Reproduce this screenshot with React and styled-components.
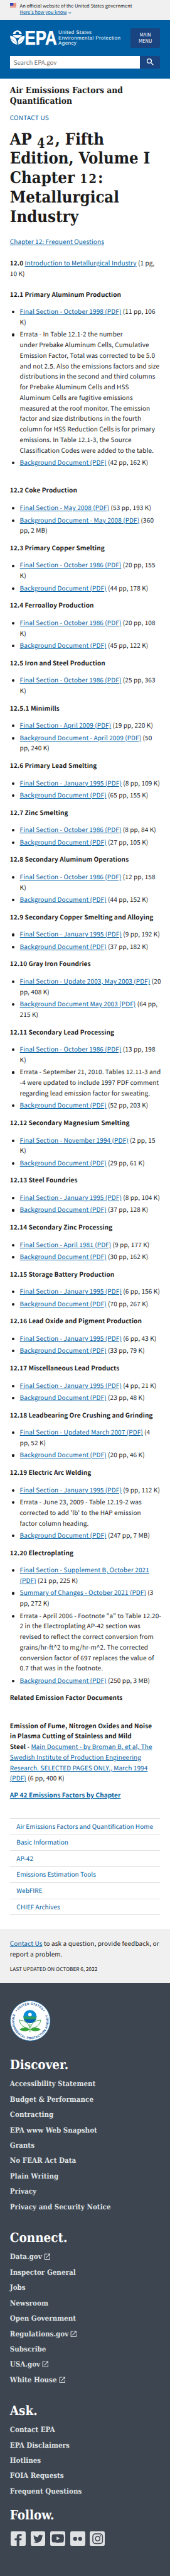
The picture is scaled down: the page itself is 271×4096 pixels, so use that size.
import React from 'react';
import styled, { createGlobalStyle } from 'styled-components';
import { FaTwitter, FaYoutube, FaInstagram } from 'react-icons/fa';
import { MdOpenInNew, MdSearch, MdExpandMore } from 'react-icons/md';

const sans = '"Noto Sans CJK SC", "Noto Sans", sans-serif';
const serif = '"DejaVu Serif Condensed", "DejaVu Serif", serif';

const GlobalStyle = createGlobalStyle`
  html { font-size: 6.585px; background: #3d4551; }
  body {
    margin: 0;
    font-family: ${sans};
    font-size: 1.52rem;
    line-height: 2.544rem;
    letter-spacing: 0.011em;
    color: #1b1b1b;
    text-rendering: geometricPrecision;
  }
  *, *::before { box-sizing: border-box; }
  h1, h2, h3, p, ul { margin: 0; padding: 0; font-size: inherit; font-weight: inherit; }
  ul { list-style: none; }
`;

const Page = styled.div`
  width: 100%;
  overflow: hidden;
  background: #fff;
  white-space: nowrap;
`;

const Link = styled.a`
  color: #005ea2;
  text-decoration: underline;
  text-underline-offset: 0.12em;
  text-decoration-thickness: 1px;
`;

/* ---------- government banner ---------- */

const Banner = styled.div`
  display: flex;
  gap: 0.8rem;
  height: 4.9rem;
  padding: 0.7rem 2.4rem 0;
  background: #f0f0f0;
  font-size: 1.148rem;
  line-height: 1.61rem;
  letter-spacing: 0;
`;

const FlagSvg = styled.svg`
  flex: none;
  width: 1.6rem;
  height: 1.1rem;
  margin-top: 0.1rem;
`;

const Chevron = styled(MdExpandMore)`
  width: 1.35rem;
  height: 1.35rem;
  margin-left: 0.15rem;
  vertical-align: -0.4rem;
  color: #005ea2;
`;

function Flag() {
  return (
    <FlagSvg viewBox="0 0 16 11">
      <rect width="16" height="11" fill="#fff" />
      {[0, 1, 2, 3, 4, 5, 6].map((i) => (
        <rect key={i} y={i * 1.69} width="16" height="0.85" fill="#db3e1f" />
      ))}
      <rect width="8" height="6" fill="#1e33b1" />
      {[1, 2.6, 4.2].flatMap((y) =>
        [1.2, 3.1, 5, 6.9].map((x) => <circle key={`${x}-${y}`} cx={x} cy={y + 0.4} r="0.4" fill="#fff" />)
      )}
    </FlagSvg>
  );
}

/* ---------- header ---------- */

const Header = styled.header`
  height: 14.1rem;
  padding: 1.9rem 2.4rem 0;
  background: #005ea2;
`;

const HeaderRow = styled.div`
  display: flex;
  align-items: center;
  justify-content: space-between;
  height: 4.7rem;
`;

const LogoSvg = styled.svg`
  width: 27.2rem;
  height: 6rem;
`;

const MenuButton = styled.button`
  width: 7.15rem;
  height: 4.7rem;
  padding: 0 0 0.05rem;
  border: 0;
  border-radius: 0.3rem;
  background: #1a4480;
  color: #fff;
  font: 1.14rem/1.6rem ${sans};
`;

const SearchBar = styled.div`
  display: flex;
  height: 3rem;
  margin-top: 2rem;
`;

const SearchField = styled.div`
  width: 31.6rem;
  padding-left: 0.9rem;
  background: #fff;
  color: #757575;
  font-size: 1.46rem;
  line-height: 3.1rem;
  letter-spacing: 0;
`;

const SearchButton = styled.button`
  display: flex;
  align-items: center;
  justify-content: center;
  width: 4.85rem;
  padding: 0;
  border: 0;
  border-radius: 0 0.3rem 0.3rem 0;
  background: #1a4480;
  color: #fff;
  font-size: 2.3rem;
`;

function Logo() {
  return (
    <LogoSvg viewBox="24 61 272 60" fill="#fff">
      <path d="M30.8 82.2 A11 10 0 0 1 52.6 82.2 H46 A4.4 4.4 0 1 0 37.4 82.2 Z" />
      <circle cx="41.7" cy="81" r="3" fill="#005ea2" />
      <path d="M31 85.4 H52.4 C50.5 89.4 46.4 91.8 41.7 91.8 C37 91.8 33 89.4 31 85.4 Z" />
      <path d="M24 86.6 C35 87.6 41.2 94.5 40.8 108 C30.4 106.2 24.4 98.6 24 86.6 Z" />
      <path d="M59.4 86.6 C48.4 87.6 42.2 94.5 42.6 108 C53 106.2 59 98.6 59.4 86.6 Z" />
      <path d="M26.8 95.5 C34 98 38.5 102 40.6 107.4" fill="none" stroke="#005ea2" strokeWidth="0.7" />
      <path d="M56.6 95.5 C49.4 98 44.9 102 42.8 107.4" fill="none" stroke="#005ea2" strokeWidth="0.7" />
      <text
        x="59.6"
        y="107.6"
        fontFamily="Liberation Sans, Arial, sans-serif"
        fontWeight="700"
        fontSize="48"
        textLength="78"
        lengthAdjust="spacingAndGlyphs"
        stroke="#fff"
        strokeWidth="0.9"
      >EPA</text>
      <g fontFamily="Liberation Sans, Arial, sans-serif" fontSize="12.2" letterSpacing="0.62">
        <text x="141" y="82.6">United States</text>
        <text x="141" y="95.2">Environmental Protection</text>
        <text x="141" y="107.8">Agency</text>
      </g>
    </LogoSvg>
  );
}

/* ---------- page body ---------- */

const Main = styled.main`
  padding: 1.65rem 2.4rem 3.25rem;
`;

const SiteTitle = styled.h2`
  font: 700 2.085rem/2.56rem ${serif};
  letter-spacing: 0;
`;

const ContactLink = styled.p`
  margin-top: 1.39rem;
  color: #005ea2;
  letter-spacing: 0.025em;
`;

const Title = styled.h1`
  margin-top: 1.68rem;
  font: 700 3.88rem/4.68rem ${serif};
  letter-spacing: 0;
`;

const OldFigure = styled.span`
  font-size: 0.78em;
  line-height: 0;
  display: inline-block;
  transform: translateY(${(p) => (p.$drop ? '0.2em' : '0')}) scaleY(${(p) => (p.$drop ? 1.1 : 0.98)});
  letter-spacing: 0.1em;
`;

const Paragraph = styled.p`
  margin-top: ${(p) => p.$gap}rem;
`;

const SectionTitle = styled.h3`
  margin-top: ${(p) => p.$gap || 1.64}rem;
  font-weight: 700;
`;

const Documents = styled.ul`
  margin-top: 1.66rem;
`;

const Item = styled.li`
  display: grid;
  grid-template-columns: 2.4rem 1fr;
  & + & { margin-top: 0.41rem; }
  &::before {
    content: '';
    width: 0.62rem;
    height: 0.62rem;
    margin: 1.07rem 0 0 0.55rem;
    border-radius: 50%;
    background: #1b1b1b;
  }
`;

const SideNav = styled.ul`
  margin-top: 4.2rem;
  border-top: 1px solid #dfe1e2;
`;

const SideNavItem = styled.li`
  height: 3.895rem;
  padding-left: 1.6rem;
  border-bottom: 1px solid #dfe1e2;
  color: #005ea2;
  letter-spacing: 0;
  line-height: 3.76rem;
`;

const Feedback = styled.section`
  height: 13.14rem;
  padding: 2.31rem 2.4rem 0;
  background: #f0f0f0;
`;

const Updated = styled.p`
  margin-top: 1.48rem;
  font-size: 1.249rem;
  line-height: 2rem;
  letter-spacing: 0;
`;

/* An entry is either plain lines of text, or a link followed by its page count and size. */
const final = (when, size, wrap) => ({ link: `Final Section - ${when} (PDF)`, size, wrap });
const background = (size, wrap, when = '') => ({ link: `Background Document${when} (PDF)`, size, wrap });

const sections = [
  { title: '12.3 Primary Copper Smelting', items: [final('October 1986', '(20 pp, 155', 'K)'), background('(44 pp, 178 K)')] },
  { title: '12.4 Ferroalloy Production', items: [final('October 1986', '(20 pp, 108', 'K)'), background('(45 pp, 122 K)')] },
  { title: '12.5 Iron and Steel Production', items: [final('October 1986', '(25 pp, 363', 'K)')] },
  { title: '12.5.1 Minimills', items: [final('April 2009', '(19 pp, 220 K)'), background('(50', 'pp, 240 K)', ' - April 2009')] },
  { title: '12.6 Primary Lead Smelting', items: [final('January 1995', '(8 pp, 109 K)'), background('(65 pp, 155 K)')] },
  { title: '12.7 Zinc Smelting', items: [final('October 1986', '(8 pp, 84 K)'), background('(27 pp, 105 K)')] },
  { title: '12.8 Secondary Aluminum Operations', items: [final('October 1986', '(12 pp, 158', 'K)'), background('(44 pp, 152 K)')] },
  { title: '12.9 Secondary Copper Smelting and Alloying', items: [final('January 1995', '(9 pp, 192 K)'), background('(37 pp, 182 K)')] },
  { title: '12.10 Gray Iron Foundries', items: [final('Update 2003, May 2003', '(20', 'pp, 408 K)'), background('(64 pp,', '215 K)', ' May 2003')] },
  {
    title: '12.11 Secondary Lead Processing',
    items: [
      final('October 1986', '(13 pp, 198', 'K)'),
      { lines: ['Errata - September 21, 2010. Tables 12.11-3 and', '-4 were updated to include 1997 PDF comment', 'regarding lead emission factor for sweating.'] },
      background('(52 pp, 203 K)'),
    ],
  },
  { title: '12.12 Secondary Magnesium Smelting', items: [final('November 1994', '(2 pp, 15', 'K)'), background('(29 pp, 61 K)')] },
  { title: '12.13 Steel Foundries', items: [final('January 1995', '(8 pp, 104 K)'), background('(37 pp, 128 K)')] },
  { title: '12.14 Secondary Zinc Processing', items: [final('April 1981', '(9 pp, 177 K)'), background('(30 pp, 162 K)')] },
  { title: '12.15 Storage Battery Production', items: [final('January 1995', '(6 pp, 156 K)'), background('(70 pp, 267 K)')] },
  { title: '12.16 Lead Oxide and Pigment Production', items: [final('January 1995', '(6 pp, 43 K)'), background('(33 pp, 79 K)')] },
  { title: '12.17 Miscellaneous Lead Products', items: [final('January 1995', '(4 pp, 21 K)'), background('(23 pp, 48 K)')] },
  { title: '12.18 Leadbearing Ore Crushing and Grinding', items: [final('Updated March 2007', '(4', 'pp, 52 K)'), background('(20 pp, 46 K)')] },
  {
    title: '12.19 Electric Arc Welding',
    items: [
      final('January 1995', '(9 pp, 112 K)'),
      { lines: ['Errata - June 23, 2009 - Table 12.19-2 was', "corrected to add 'lb' to the HAP emission", 'factor column heading.'] },
      background('(247 pp, 7 MB)'),
    ],
  },
  {
    title: '12.20 Electroplating',
    items: [
      { link: 'Final Section - Supplement B, October 2021', linkWrap: '(PDF)', size: '(21 pp, 225 K)' },
      { link: 'Summary of Changes - October 2021 (PDF)', size: '(3', wrap: 'pp, 272 K)' },
      {
        lines: [
          'Errata - April 2006 - Footnote "a" to Table 12.20-',
          '2 in the Electroplating AP-42 section was',
          'revised to reflect the correct conversion from',
          'grains/hr-ft^2 to mg/hr-m^2. The corrected',
          'conversion factor of 697 replaces the value of',
          '0.7 that was in the footnote.',
        ],
      },
      background('(250 pp, 3 MB)'),
    ],
  },
];

const aluminum = [
  final('October 1998', '(11 pp, 106', 'K)'),
  {
    lines: [
      'Errata - In Table 12.1-2 the number',
      'under Prebake Aluminum Cells, Cumulative',
      'Emission Factor, Total was corrected to be 5.0',
      'and not 2.5. Also the emissions factors and size',
      'distributions in the second and third columns',
      'for Prebake Aluminum Cells and HSS',
      'Aluminum Cells are fugitive emissions',
      'measured at the roof monitor. The emission',
      'factor and size distributions in the fourth',
      'column for HSS Reduction Cells is for primary',
      'emissions. In Table 12.1-3, the Source',
      'Classification Codes were added to the table.',
    ],
  },
  background('(42 pp, 162 K)'),
];

const coke = [final('May 2008', '(53 pp, 193 K)'), background('(360', 'pp, 2 MB)', ' - May 2008')];

function Lines({ lines }) {
  return lines.map((line, i) => (
    <React.Fragment key={i}>
      {i > 0 && <br />}
      {line}
    </React.Fragment>
  ));
}

function DocumentList({ items }) {
  return (
    <Documents>
      {items.map((item, i) => (
        <Item key={i}>
          {item.lines ? (
            <span><Lines lines={item.lines} /></span>
          ) : (
            <span>
              <Link><Lines lines={item.linkWrap ? [item.link, item.linkWrap] : [item.link]} /></Link>
              {' '}
              <Lines lines={item.wrap ? [item.size, item.wrap] : [item.size]} />
            </span>
          )}
        </Item>
      ))}
    </Documents>
  );
}

/* ---------- footer ---------- */

const Footer = styled.footer`
  height: 142.96rem;
  padding: 4.15rem 2.4rem 0;
  background: #3d4551;
  font-family: ${serif};
  font-weight: 700;
  letter-spacing: 0;
`;

const SealSvg = styled.svg`
  display: block;
  width: 9.8rem;
  height: 9.8rem;
  margin-left: 0.1rem;
`;

const FooterTitle = styled.h2`
  margin-top: ${(p) => p.$gap}rem;
  color: #fff;
  font-size: 3.11rem;
  line-height: 3.6rem;
`;

const FooterLinks = styled.ul`
  margin-top: 0.82rem;
`;

const FooterLink = styled.li`
  height: 3.715rem;
  color: #dfe1e2;
  font-size: 1.75rem;
  line-height: 3.66rem;
`;

const ExternalIcon = styled(MdOpenInNew)`
  width: 1.9rem;
  height: 1.9rem;
  margin-left: 0.33rem;
  vertical-align: -0.39rem;
`;

const SocialRow = styled.div`
  display: flex;
  gap: 1.2rem;
  margin: 1.95rem 0 0 0.2rem;
`;

const SocialTile = styled.a`
  display: flex;
  align-items: center;
  justify-content: center;
  width: 3.6rem;
  height: 3.6rem;
  overflow: hidden;
  border-radius: 0.35rem;
  background: #dfe1e2;
  color: #3d4551;
  font-size: ${(p) => p.$size || 1}rem;
`;

const TileArt = styled.svg`
  width: 3.6rem;
  height: 3.6rem;
  fill: currentColor;
`;

function Seal() {
  return (
    <SealSvg viewBox="-49 -49 98 98">
      <circle r="48.2" fill="#fff" stroke="#1c74ba" strokeWidth="1" />
      <defs>
        <path id="ringTop" d="M-38.6 0 A38.6 38.6 0 0 1 38.6 0" />
        <path id="ringBottom" d="M-32.3 -30.1 A44.2 44.2 0 1 0 32.3 -30.1" />
        <clipPath id="globe"><circle cx="-0.7" cy="-10.3" r="16" /></clipPath>
      </defs>
      <g fontFamily="Liberation Sans, Arial, sans-serif" fontWeight="700" fontSize="7.6" fill="#1b5c9d" textAnchor="middle">
        <text letterSpacing="0.5"><textPath href="#ringTop" startOffset="50%">UNITED STATES</textPath></text>
        <text letterSpacing="0.62"><textPath href="#ringBottom" startOffset="50%">ENVIRONMENTAL PROTECTION AGENCY</textPath></text>
      </g>
      <circle cx="-33.8" cy="-24.5" r="1.5" fill="#1b5c9d" />
      <circle cx="33" cy="-24.5" r="1.5" fill="#1b5c9d" />
      <g clipPath="url(#globe)">
        <rect x="-18" y="-28" width="36" height="36" fill="#0a8ed8" />
        <path d="M-18 -9.5 L-10 -11 L-4 -9.5 L3 -11 L10 -9.5 L18 -11 V8 H-18 Z" fill="#2c9b5c" />
        <rect x="-18" y="-4" width="36" height="14" fill="#0b62b4" />
      </g>
      <circle cx="-0.7" cy="-15.2" r="4.3" fill="#fff" />
      <g fill="#fff" stroke="#37a33a" strokeWidth="1.4">
        <path d="M-2 16 C-4 5 -14 -1 -26.6 -2 C-25 8 -18 16 -6 17" />
        <path d="M1 16 C3 5 13 -1 25.6 -2 C24 8 17 16 5 17" />
      </g>
      <path d="M-26.5 21 C-18 14.5 -8 14.5 -0.6 21 C6.5 14.5 17 14.5 25.5 21 C17 26.5 6.5 26.5 -0.6 21 C-8 26.5 -18 26.5 -26.5 21 Z" fill="#37a33a" />
      <path d="M-0.6 7 V27.5" stroke="#37a33a" strokeWidth="1.5" />
    </SealSvg>
  );
}

const discover = ['Accessibility Statement', 'Budget & Performance', 'Contracting', 'EPA www Web Snapshot', 'Grants', 'No FEAR Act Data', 'Plain Writing', 'Privacy', 'Privacy and Security Notice'];
const connect = ['Data.gov', 'Inspector General', 'Jobs', 'Newsroom', 'Open Government', 'Regulations.gov', 'Subscribe', 'USA.gov', 'White House'];
const ask = ['Contact EPA', 'EPA Disclaimers', 'Hotlines', 'FOIA Requests', 'Frequent Questions'];
const external = new Set(['Data.gov', 'Regulations.gov', 'USA.gov', 'White House']);

function FooterGroup({ title, gap, links }) {
  return (
    <>
      <FooterTitle $gap={gap}>{title}</FooterTitle>
      <FooterLinks>
        {links.map((label) => (
          <FooterLink key={label}>
            {label}
            {external.has(label) && <ExternalIcon />}
          </FooterLink>
        ))}
      </FooterLinks>
    </>
  );
}

const navigation = ['Air Emissions Factors and Quantification Home', 'Basic Information', 'AP-42', 'Emissions Estimation Tools', 'WebFIRE', 'CHIEF Archives'];

export default function App() {
  return (
    <Page>
      <GlobalStyle />
      <Banner>
        <Flag />
        <div>
          An official website of the United States government
          <br />
          <Link>Here's how you know</Link>
          <Chevron />
        </div>
      </Banner>
      <Header>
        <HeaderRow>
          <Logo />
          <MenuButton>MAIN<br />MENU</MenuButton>
        </HeaderRow>
        <SearchBar>
          <SearchField>Search EPA.gov</SearchField>
          <SearchButton><MdSearch /></SearchButton>
        </SearchBar>
      </Header>
      <Main>
        <SiteTitle>Air Emissions Factors and<br />Quantification</SiteTitle>
        <ContactLink>CONTACT US</ContactLink>
        <Title>
          AP <OldFigure $drop>4</OldFigure><OldFigure>2</OldFigure>, Fifth
          <br />Edition, Volume I
          <br />Chapter <OldFigure>12</OldFigure>:
          <br />Metallurgical
          <br />Industry
        </Title>
        <Paragraph $gap={2.31}><Link>Chapter 12: Frequent Questions</Link></Paragraph>
        <Paragraph $gap={2.62}>
          <strong>12.0</strong> <Link>Introduction to Metallurgical Industry</Link> (1 pg,
          <br />10 K)
        </Paragraph>
        <SectionTitle $gap={2.46}>12.1 Primary Aluminum Production</SectionTitle>
        <DocumentList items={aluminum} />
        <SectionTitle $gap={4.18}>12.2 Coke Production</SectionTitle>
        <DocumentList items={coke} />
        {sections.map((section) => (
          <React.Fragment key={section.title}>
            <SectionTitle>{section.title}</SectionTitle>
            <DocumentList items={section.items} />
          </React.Fragment>
        ))}
        <SectionTitle>Related Emission Factor Documents</SectionTitle>
        <Paragraph $gap={4.18}>
          <strong>Emission of Fume, Nitrogen Oxides and Noise<br />in Plasma Cutting of Stainless and Mild<br />Steel</strong> -{' '}
          <Link>
            Main Document - by Broman B. et al, The
            <br />Swedish Institute of Production Engineering
            <br />Research. SELECTED PAGES ONLY., March 1994
            <br />(PDF)
          </Link>{' '}
          (6 pp, 400 K)
        </Paragraph>
        <Paragraph $gap={1.52}><strong><Link>AP 42 Emissions Factors by Chapter</Link></strong></Paragraph>
        <SideNav>
          {navigation.map((label) => <SideNavItem key={label}>{label}</SideNavItem>)}
        </SideNav>
      </Main>
      <Feedback>
        <p><Link>Contact Us</Link> to ask a question, provide feedback, or<br />report a problem.</p>
        <Updated>LAST UPDATED ON OCTOBER 6, 2022</Updated>
      </Feedback>
      <Footer>
        <Seal />
        <FooterGroup title="Discover." gap={4.1} links={discover} />
        <FooterGroup title="Connect." gap={3.93} links={connect} />
        <FooterGroup title="Ask." gap={3.9} links={ask} />
        <FooterTitle $gap={2.25}>Follow.</FooterTitle>
        <SocialRow>
          <SocialTile>
            <TileArt viewBox="0 0 36 36">
              <path d="M14.7 36 V21.6 H9.7 V17 H14.7 V13.2 C14.7 9 17.2 6.6 21.2 6.6 H26.7 V11 H23.6 C21.6 11 21 12 21 13.6 V17 H26.6 L25.8 21.6 H21 V36 Z" />
            </TileArt>
          </SocialTile>
          <SocialTile $size={2.4}><FaTwitter /></SocialTile>
          <SocialTile $size={3.1}><FaYoutube /></SocialTile>
          <SocialTile>
            <TileArt viewBox="0 0 36 36">
              <circle cx="11.8" cy="18" r="4.9" />
              <circle cx="24" cy="18" r="4.9" />
            </TileArt>
          </SocialTile>
          <SocialTile $size={2.95}><FaInstagram /></SocialTile>
        </SocialRow>
      </Footer>
    </Page>
  );
}
